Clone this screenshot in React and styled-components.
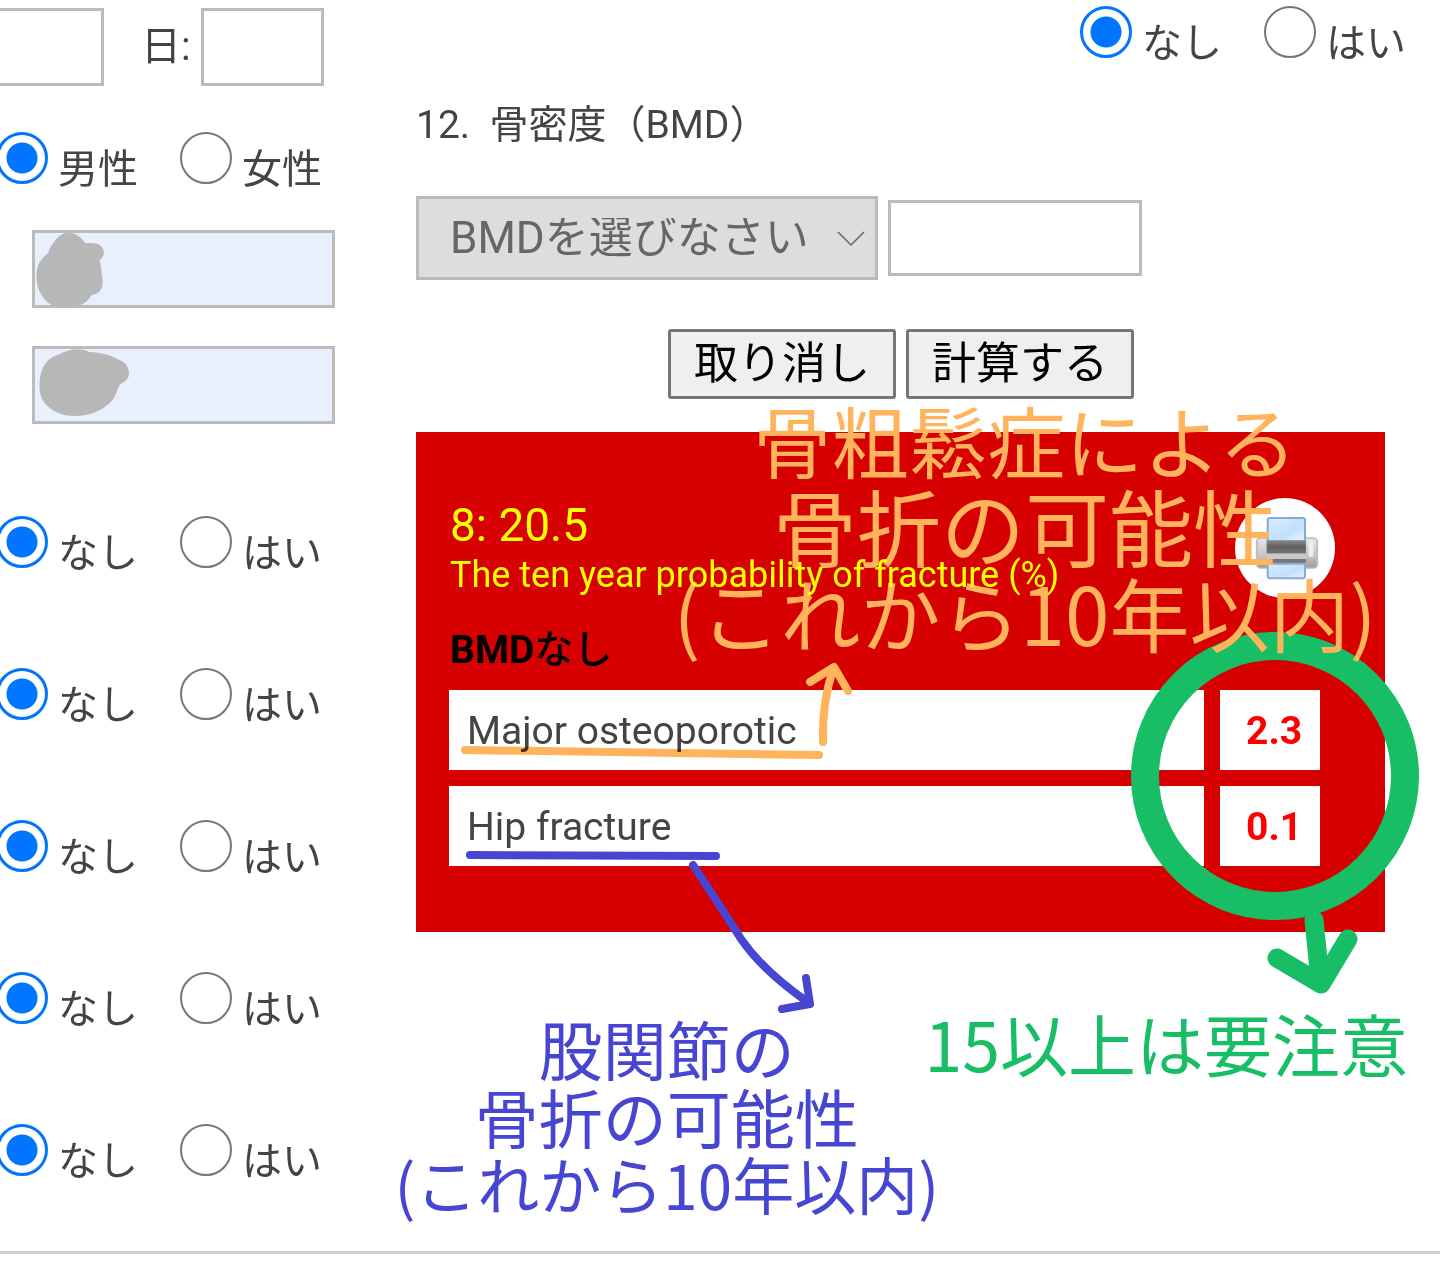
import React from "react";
import styled, { createGlobalStyle } from "styled-components";

const ORANGE = "#ffb35c";
const BLUE = "#4646d2";
const GREEN = "#17be66";

const GlobalStyle = createGlobalStyle`
  *, *::before, *::after { box-sizing: border-box; }
  body {
    margin: 0;
    background: #fff;
    color: #444;
    font-family: Roboto, "Noto Sans CJK JP", sans-serif;
    font-size: 40px;
    line-height: 40px;
  }
  input, select, button { font: inherit; margin: 0; }
`;

const Page = styled.main`
  display: flex;
  align-items: flex-start;
  padding-bottom: 34px;
  overflow-x: hidden;
  border-bottom: 3px solid #ccc;
`;

const PersonColumn = styled.section`
  flex: 0 0 416px;
  display: flex;
  flex-direction: column;
  gap: 40px;
  padding-top: 8px;
`;

const RiskColumn = styled.section`
  flex: 1;
  min-width: 0;
`;

const DateRow = styled.div`
  display: flex;
  align-items: center;
  margin-left: -19px;
`;

const DayLabel = styled.label`
  margin: 0 10px 0 37px;
`;

const TextBox = styled.input`
  display: block;
  width: ${(p) => p.$width}px;
  height: ${(p) => p.$height || 78}px;
  padding: 0 16px;
  border: 3px solid #bbb;
  border-radius: 0;
  background: ${(p) => (p.$filled ? "#e8effd" : "#fff")};
`;

const MeasureStack = styled.div`
  display: flex;
  flex-direction: column;
  gap: 38px;
  padding-left: 32px;
`;

const MeasureField = styled.div`
  position: relative;
`;

const Scribble = styled.svg`
  position: absolute;
  left: 0;
  top: 0;
  pointer-events: none;
`;

const QuestionStack = styled.div`
  display: flex;
  flex-direction: column;
  gap: 88px;
  padding-top: 46px;
`;

const RadioRow = styled.div`
  display: flex;
  align-items: center;
  gap: 42px;
  margin-left: -4px;
  justify-content: ${(p) => (p.$end ? "flex-end" : "flex-start")};
  padding-right: ${(p) => (p.$end ? 34 : 0)}px;
`;

const Choice = styled.label`
  display: flex;
  align-items: center;
  gap: 10px;
`;

const ChoiceText = styled.span`
  padding-top: 24px;
`;

const Radio = styled.input`
  appearance: none;
  flex: none;
  width: 52px;
  height: 52px;
  border: 2px solid #767676;
  border-radius: 50%;
  background: #fff;
  &:checked {
    border: 3px solid #0075ff;
    background: radial-gradient(circle, #0075ff 15px, #fff 16px);
  }
`;

const Question = styled.h2`
  margin: 37px 0 47px;
  font-size: 39px;
  font-weight: 400;
  line-height: 48px;
  white-space: pre;
`;

const BmdRow = styled.div`
  display: flex;
  align-items: center;
  gap: 10px;
`;

const SelectBox = styled.div`
  position: relative;
`;

const BmdSelect = styled.select`
  appearance: none;
  display: block;
  width: 462px;
  height: 84px;
  padding: 0 60px 0 31px;
  border: 3px solid #bbb;
  border-radius: 0;
  background: #ddd;
  color: #666;
  opacity: 1;
  font-size: 44px;
`;

const Chevron = styled.svg`
  position: absolute;
  right: 13px;
  top: 34px;
  pointer-events: none;
`;

const ButtonRow = styled.div`
  display: flex;
  gap: 10px;
  margin: 49px 0 33px 252px;
`;

const ActionButton = styled.button`
  width: 228px;
  height: 70px;
  padding: 0;
  border: 3px solid #767676;
  border-radius: 3px;
  background: #efefef;
  color: #000;
  font-size: 44px;
`;

const ResultCard = styled.div`
  position: relative;
  margin-right: 55px;
  padding: 66px 0 50px;
  background: #d60000;
`;

const ResultHead = styled.div`
  display: flex;
  justify-content: space-between;
  padding: 0 50px 0 34px;
`;

const ResultText = styled.div`
  position: relative;
  z-index: 3;
  color: #ff0;
`;

const BmiLine = styled.div`
  font-size: 46px;
  line-height: 54px;
`;

const ProbabilityLine = styled.div`
  font-size: 36px;
  line-height: 46px;
  white-space: nowrap;
`;

const PrintButton = styled.button`
  width: 100px;
  height: 100px;
  padding: 0;
  border: 0;
  border-radius: 50%;
  background: #fff;
  svg { display: block; }
`;

const BmdState = styled.h3`
  margin: 28px 0 0 34px;
  color: #000;
  font-size: 39px;
  line-height: 48px;
  font-weight: 700;
`;

const BmdStateWord = styled.span`
  font-weight: 500;
`;

const ResultTable = styled.table`
  width: calc(100% - 66px);
  margin-left: 17px;
  border-collapse: separate;
  border-spacing: 16px;
  font-size: 39px;
`;

const RiskName = styled.th`
  height: 80px;
  padding: 2px 18px 0;
  background: #fff;
  text-align: left;
  font-weight: 400;
`;

const RiskValue = styled.td`
  width: 100px;
  padding: 2px 0 0 26px;
  background: #fff;
  color: #f00;
  font-weight: 700;
`;

const Note = styled.div`
  display: flex;
  flex-direction: column;
  align-items: center;
  min-width: 0;
  color: ${(p) => p.$color};
  font-family: "Noto Sans CJK JP", sans-serif;
  line-height: ${(p) => p.$line}px;
  white-space: nowrap;
`;

const NoteLine = styled.span`
  font-size: ${(p) => p.$size}px;
`;

const CardNote = styled(Note)`
  position: absolute;
  z-index: 2;
  left: 259px;
  top: -36px;
  width: 700px;
  pointer-events: none;
`;

const SideNote = styled(Note)`
  flex: none;
`;

const PenStrokes = styled.svg`
  position: absolute;
  z-index: 1;
  left: 0;
  top: 0;
  overflow: visible;
  fill: none;
  stroke-linecap: round;
  stroke-linejoin: round;
  pointer-events: none;
`;

const Highlighter = styled(PenStrokes)`
  mix-blend-mode: multiply;
`;

const RingStrokes = styled(PenStrokes)`
  left: auto;
  right: -36px;
  top: 198px;
`;

const NoteRow = styled.div`
  display: flex;
  align-items: flex-start;
  justify-content: space-between;
  margin: 81px 32px 0 -7px;
`;

function RadioPair({ name, options = ["なし", "はい"], end }) {
  return (
    <RadioRow role="radiogroup" aria-label={name} $end={end}>
      {options.map((text, i) => (
        <Choice key={text}>
          <Radio type="radio" name={name} defaultChecked={i === 0} />
          <ChoiceText>{text}</ChoiceText>
        </Choice>
      ))}
    </RadioRow>
  );
}

function PrinterIcon() {
  return (
    <svg width="100" height="100" viewBox="345 57 300 300" aria-hidden="true">
      <defs>
        <linearGradient id="paper" x1="0" y1="0" x2="1" y2="1">
          <stop offset="0" stopColor="#d8ecff" />
          <stop offset="0.6" stopColor="#c2e0fb" />
          <stop offset="1" stopColor="#eaf5ff" />
        </linearGradient>
        <linearGradient id="shell" x1="0" y1="0" x2="0" y2="1">
          <stop offset="0" stopColor="#e6e6e6" />
          <stop offset="0.6" stopColor="#c4c4c4" />
          <stop offset="1" stopColor="#999" />
        </linearGradient>
        <linearGradient id="slot" x1="0" y1="0" x2="0" y2="1">
          <stop offset="0" stopColor="#8a8a8a" />
          <stop offset="0.5" stopColor="#606060" />
          <stop offset="1" stopColor="#777" />
        </linearGradient>
      </defs>
      <rect x="410" y="177" width="182" height="90" rx="12" fill="url(#shell)" stroke="#bbb" strokeWidth="5" />
      <rect x="566" y="186" width="14" height="48" rx="6" fill="#eee" />
      <rect x="443" y="117" width="112" height="70" rx="6" fill="url(#paper)" stroke="#88abd0" strokeWidth="6" />
      <rect x="440" y="184" width="118" height="40" fill="url(#slot)" />
      <rect x="440" y="224" width="118" height="16" fill="#c9c9c9" />
      <rect x="440" y="240" width="118" height="14" fill="#777" />
      <path d="M443 254H555V290Q555 298 547 298H451Q443 298 443 290Z" fill="url(#paper)" stroke="#88abd0" strokeWidth="6" />
    </svg>
  );
}

export default function App() {
  return (
    <>
      <GlobalStyle />
      <Page>
        <PersonColumn>
          <DateRow>
            <TextBox $width={123} aria-label="月" />
            <DayLabel htmlFor="day">日:</DayLabel>
            <TextBox id="day" $width={123} />
          </DateRow>
          <RadioPair name="sex" options={["男性", "女性"]} />
          <MeasureStack>
            <MeasureField>
              <TextBox $width={303} $filled aria-label="体重" />
              <Scribble width="100" height="80" viewBox="96 60 300 240" aria-hidden="true">
                <path
                  fill="#b7b7b7"
                  d="M145 130C146 116 155 106 163 95C174 78 188 68 206 68C231 68 244 84 257 100C274 98 292 98 303 108C315 120 315 139 298 151C303 163 303 177 305 190C310 214 310 234 297 246C290 252 283 254 275 255C263 279 232 294 197 294C166 294 140 281 126 257C108 231 105 194 115 165C121 150 132 138 145 130Z"
                />
              </Scribble>
            </MeasureField>
            <MeasureField>
              <TextBox $width={303} $filled aria-label="身長" />
              <Scribble width="100" height="80" viewBox="96 408 300 240" aria-hidden="true">
                <path
                  fill="#b7b7b7"
                  d="M182 431C204 418 245 411 267 426C305 427 339 438 366 454C382 463 390 482 386 499C381 512 370 518 360 524C353 531 353 540 349 549C338 581 301 606 257 615C216 622 178 617 150 594C122 575 115 544 120 507C123 470 144 440 182 431Z"
                />
              </Scribble>
            </MeasureField>
          </MeasureStack>
          <QuestionStack>
            {["q1", "q2", "q3", "q4", "q5"].map((name) => (
              <RadioPair key={name} name={name} />
            ))}
          </QuestionStack>
        </PersonColumn>

        <RiskColumn>
          <RadioPair name="q11" end />
          <Question id="bmd-title">{"12.  骨密度（BMD）"}</Question>
          <BmdRow>
            <SelectBox>
              <BmdSelect disabled aria-labelledby="bmd-title">
                <option>BMDを選びなさい</option>
              </BmdSelect>
              <Chevron width="28" height="18" viewBox="0 0 28 18" aria-hidden="true">
                <path d="M1 2L14 15L27 2" fill="none" stroke="#666" strokeWidth="1.5" />
              </Chevron>
            </SelectBox>
            <TextBox $width={254} $height={76} aria-labelledby="bmd-title" />
          </BmdRow>
          <ButtonRow>
            <ActionButton type="button">取り消し</ActionButton>
            <ActionButton type="button">計算する</ActionButton>
          </ButtonRow>

          <ResultCard>
            <ResultHead>
              <ResultText>
                <BmiLine>8: 20.5</BmiLine>
                <ProbabilityLine>The ten year probability of fracture (%)</ProbabilityLine>
              </ResultText>
              <PrintButton type="button" aria-label="Print">
                <PrinterIcon />
              </PrintButton>
            </ResultHead>
            <BmdState>
              BMD<BmdStateWord>なし</BmdStateWord>
            </BmdState>
            <ResultTable>
              <tbody>
                <tr>
                  <RiskName scope="row">Major osteoporotic</RiskName>
                  <RiskValue>2.3</RiskValue>
                </tr>
                <tr>
                  <RiskName scope="row">Hip fracture</RiskName>
                  <RiskValue>0.1</RiskValue>
                </tr>
              </tbody>
            </ResultTable>

            <Highlighter width="450" height="590" stroke={ORANGE} strokeWidth="8" aria-hidden="true">
              <path d="M49 318Q220 321 403 323" />
            </Highlighter>
            <PenStrokes width="450" height="590" strokeWidth="8" aria-hidden="true">
              <g stroke={ORANGE}>
                <path d="M407 310Q406 270 417 238" />
                <path d="M394 250L418 235L432 259" />
              </g>
              <g stroke={BLUE}>
                <path d="M54 423L300 424" />
                <path d="M277 433Q312 486 325 507Q348 540 393 571" />
                <path d="M390 546L394 572L366 577" />
              </g>
            </PenStrokes>
            <RingStrokes width="292" height="364" stroke={GREEN} aria-hidden="true">
              <circle cx="146" cy="146" r="130" strokeWidth="28" />
              <path d="M185 290L191 350M148 328L192 354L219 309" strokeWidth="19" />
            </RingStrokes>
            <CardNote $color={ORANGE} $line={86}>
              <NoteLine $size={78}>骨粗鬆症による</NoteLine>
              <NoteLine $size={84}>骨折の可能性</NoteLine>
              <NoteLine $size={80}>(これから10年以内)</NoteLine>
            </CardNote>
          </ResultCard>

          <NoteRow>
            <Note $color={BLUE} $line={68}>
              <NoteLine $size={64}>股関節の</NoteLine>
              <NoteLine $size={64}>骨折の可能性</NoteLine>
              <NoteLine $size={62}>(これから10年以内)</NoteLine>
            </Note>
            <SideNote $color={GREEN} $line={60}>
              <NoteLine $size={68}>15以上は要注意</NoteLine>
            </SideNote>
          </NoteRow>
        </RiskColumn>
      </Page>
    </>
  );
}
